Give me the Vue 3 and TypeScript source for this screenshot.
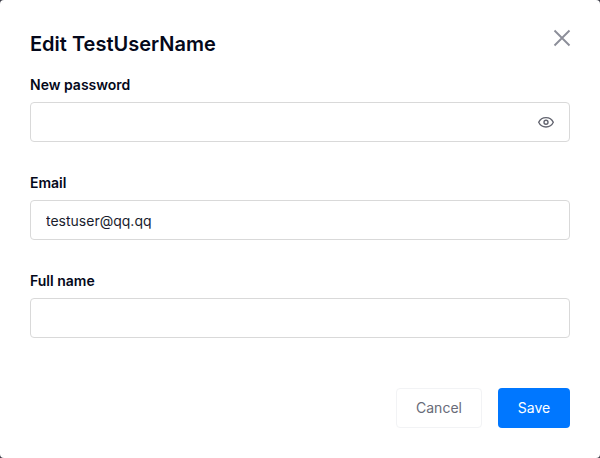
<script setup lang="ts">
import { ref } from 'vue'

const password = ref('')
const email = ref('testuser@qq.qq')
const fullName = ref('')
const visible = ref(false)
</script>

<template>
  <form class="modal" @submit.prevent>
    <header class="header">
      <h1 class="title">Edit TestUserName</h1>
      <button class="close" type="button">
        <svg width="18" height="18" viewBox="0 0 18 18"><path d="M1.5 1.5l15 15M16.5 1.5l-15 15" /></svg>
      </button>
    </header>
    <label class="field">
      <span class="label">New password</span>
      <span class="control">
        <input v-model="password" :type="visible ? 'text' : 'password'" />
        <svg class="eye" width="16" height="16" viewBox="0 0 16 16" @click="visible = !visible">
          <path d="M.7 8.3C2.2 5.1 4.9 3.6 8 3.6S13.8 5.1 15.3 8.3C13.8 11.5 11.1 13 8 13S2.2 11.5.7 8.3Z" />
          <circle cx="8" cy="8.3" r="2" />
        </svg>
      </span>
    </label>
    <label class="field">
      <span class="label">Email</span>
      <span class="control"><input v-model="email" type="text" /></span>
    </label>
    <label class="field">
      <span class="label">Full name</span>
      <span class="control"><input v-model="fullName" type="text" /></span>
    </label>
    <footer class="actions">
      <button class="btn cancel" type="button">Cancel</button>
      <button class="btn save" type="submit">Save</button>
    </footer>
  </form>
</template>

<style>
body { background: #3c3d48; }
</style>

<style scoped>
.modal {
  box-sizing: border-box;
  width: 600px;
  height: 458px;
  padding: 30px;
  background: #fff;
  border-radius: 4px;
  color: #04081a;
  font: 14px/20px Inter, sans-serif;
}
.header { display: flex; justify-content: space-between; height: 45px; }
.title { margin: 0; font-size: 20px; line-height: 28px; font-weight: 600; }
.close { display: flex; width: 18px; height: 18px; margin: -1px -1px 0 0; padding: 0; border: 0; background: none; }
.close svg { fill: none; stroke: #8c8e99; stroke-width: 1.9; }
.field { display: block; height: 98px; }
.label { display: block; height: 27px; font-weight: 600; }
.control { display: flex; align-items: center; box-sizing: border-box; height: 40px; padding: 0 15px; border: 1px solid #d9d9d9; border-radius: 4px; }
input { flex: 1; min-width: 0; padding: 2px 0 0; border: 0; outline: 0; background: none; color: #1a1d2e; font: inherit; }
.eye { fill: none; stroke: #62646f; stroke-width: 1.4; }
.actions { display: flex; justify-content: flex-end; gap: 16px; margin-top: 19px; }
.btn { box-sizing: border-box; height: 40px; padding: 0; border-radius: 4px; font: inherit; }
.cancel { width: 86px; border: 1px solid #f2f3f5; background: #fff; color: #686b78; }
.save { width: 72px; border: 0; background: #0077ff; color: #fff; }
</style>
